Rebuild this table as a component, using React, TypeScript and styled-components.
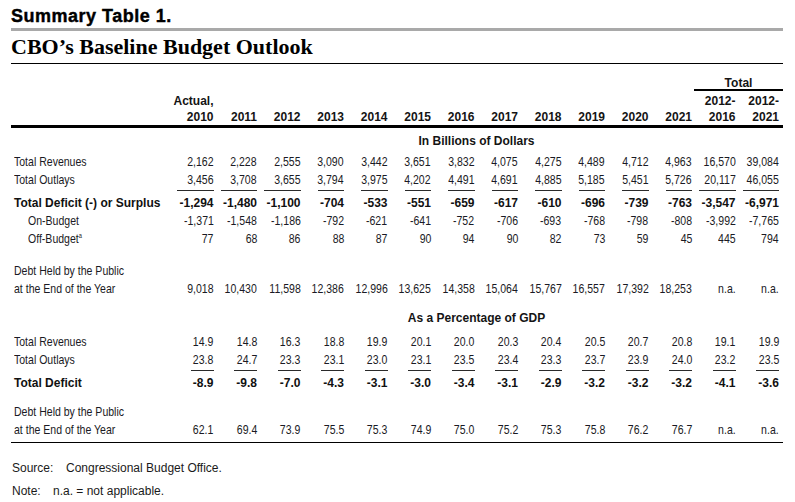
import React from "react";
import styled, { createGlobalStyle } from "styled-components";

const GlobalStyle = createGlobalStyle`
  html, body { margin: 0; padding: 0; background: #ffffff; }
  body { font-family: "Liberation Sans", Arial, sans-serif; color: #141414; }
`;

const COLS = "159px repeat(14, 43.5px)";

const Page = styled.div`
  box-sizing: border-box;
  width: 795px;
  padding: 6px 12px 0 11px;
`;

const Kicker = styled.div`
  font-family: "Liberation Sans", Arial, sans-serif;
  font-weight: 700;
  font-size: 18px;
  line-height: 20px;
  letter-spacing: 0.5px;
  color: #000;
  -webkit-text-stroke: 0.4px #000;
`;

const GreyRule = styled.div`
  height: 3px;
  margin-top: 2px;
  background: #a9a9a9;
`;

const Title = styled.h1`
  margin: 4px 0 0;
  font-family: "Liberation Serif", "Times New Roman", serif;
  font-weight: 700;
  font-size: 22px;
  line-height: 24px;
  color: #000;
`;

const TitleRule = styled.div`
  height: 1px;
  margin-top: 4px;
  background: #000;
`;

const HeadGrid = styled.div`
  display: grid;
  grid-template-columns: ${COLS};
  grid-template-rows: 16px 18px 16px;
  padding-right: 4px;
  margin-top: 11px;
  border-bottom: 3px solid #000;
  font-family: "Liberation Sans", Arial, sans-serif;
  font-weight: 700;
  font-size: 12px;
  line-height: 16px;
  color: #141414;
`;

const HeadCell = styled.div<{ $col: number; $row: number }>`
  grid-column: ${(p) => p.$col};
  grid-row: ${(p) => p.$row};
  text-align: right;
  white-space: nowrap;
  padding-top: ${(p) => (p.$row === 2 ? "1.5px" : "0")};
`;

const TotalCell = styled.div`
  grid-column: 14 / 16;
  grid-row: 1;
  margin: 0 -4px 0 2px;
  text-align: center;
  border-bottom: 2px solid #000;
  height: 14px;
`;

const Body = styled.div`
  padding-bottom: 3px;
  border-bottom: 1px solid #000;
`;

const SectionRow = styled.div<{ $gap: number }>`
  display: grid;
  grid-template-columns: ${COLS};
  padding-right: 4px;
  margin-top: ${(p) => p.$gap}px;
  font-family: "Liberation Sans", Arial, sans-serif;
  font-weight: 700;
  font-size: 12px;
  line-height: 18px;
`;

const SectionTitle = styled.div`
  grid-column: 2 / -1;
  text-align: center;
  padding-left: 4px;
`;

const DataRow = styled.div<{ $bold?: boolean; $gap?: number }>`
  display: grid;
  grid-template-columns: ${COLS};
  padding-right: 4px;
  margin-top: ${(p) => p.$gap ?? 0}px;
  font-family: "Liberation Sans", Arial, sans-serif;
  font-weight: ${(p) => (p.$bold ? 700 : 400)};
  font-size: ${(p) => (p.$bold ? "12px" : "13px")};
  line-height: 18px;
  color: ${(p) => (p.$bold ? "#111" : "#1a1a24")};
`;

const Label = styled.div<{ $indent?: boolean }>`
  padding-left: ${(p) => (p.$indent ? "17px" : "3px")};
  white-space: nowrap;
`;

const Value = styled.div`
  text-align: right;
  white-space: nowrap;
`;

/* condensed face: the reference uses a narrow grotesque */
const Narrow = styled.span<{ $origin: "left" | "right" }>`
  display: inline-block;
  transform: scaleX(0.81);
  transform-origin: ${(p) => p.$origin} center;
  white-space: nowrap;
`;

const Ruled = styled.span<{ $hidden?: boolean }>`
  display: inline-block;
  margin-top: 1px;
  padding: 3px 0 0 ${(p) => (p.$hidden ? 0 : 2)}px;
  border-top: 1px solid ${(p) => (p.$hidden ? "transparent" : "#2a2a2a")};
`;

const Sup = styled.sup`
  font-size: 7px;
  line-height: 0;
  vertical-align: 5px;
`;

const Notes = styled.div`
  margin-top: 16px;
  font-family: "Liberation Sans", Arial, sans-serif;
  font-size: 12px;
  color: #1a1a1a;
`;

const NoteLine = styled.div`
  display: flex;
  line-height: 18px;
  height: 23px;
  padding-left: 1px;
`;

const NoteKey = styled.span<{ $w: number }>`
  width: ${(p) => p.$w}px;
  flex: none;
`;

type Row = { label: string; values: string[]; bold?: boolean; indent?: boolean; ruled?: boolean; gap?: number; sup?: string };

const years = ["2010", "2011", "2012", "2013", "2014", "2015", "2016", "2017", "2018", "2019", "2020", "2021"];

const billions: Row[] = [
  { label: "Total Revenues", values: ["2,162", "2,228", "2,555", "3,090", "3,442", "3,651", "3,832", "4,075", "4,275", "4,489", "4,712", "4,963", "16,570", "39,084"], gap: 3 },
  { label: "Total Outlays", values: ["3,456", "3,708", "3,655", "3,794", "3,975", "4,202", "4,491", "4,691", "4,885", "5,185", "5,451", "5,726", "20,117", "46,055"] },
  { label: "Total Deficit (-) or Surplus", bold: true, ruled: true, values: ["-1,294", "-1,480", "-1,100", "-704", "-533", "-551", "-659", "-617", "-610", "-696", "-739", "-763", "-3,547", "-6,971"] },
  { label: "On-Budget", indent: true, values: ["-1,371", "-1,548", "-1,186", "-792", "-621", "-641", "-752", "-706", "-693", "-768", "-798", "-808", "-3,992", "-7,765"] },
  { label: "Off-Budget", sup: "a", indent: true, values: ["77", "68", "86", "88", "87", "90", "94", "90", "82", "73", "59", "45", "445", "794"] },
  { label: "Debt Held by the Public", values: [], gap: 14 },
  { label: "at the End of the Year", values: ["9,018", "10,430", "11,598", "12,386", "12,996", "13,625", "14,358", "15,064", "15,767", "16,557", "17,392", "18,253", "n.a.", "n.a."] },
];

const percent: Row[] = [
  { label: "Total Revenues", values: ["14.9", "14.8", "16.3", "18.8", "19.9", "20.1", "20.0", "20.3", "20.4", "20.5", "20.7", "20.8", "19.1", "19.9"], gap: 6 },
  { label: "Total Outlays", values: ["23.8", "24.7", "23.3", "23.1", "23.0", "23.1", "23.5", "23.4", "23.3", "23.7", "23.9", "24.0", "23.2", "23.5"] },
  { label: "Total Deficit", bold: true, ruled: true, values: ["-8.9", "-9.8", "-7.0", "-4.3", "-3.1", "-3.0", "-3.4", "-3.1", "-2.9", "-3.2", "-3.2", "-3.2", "-4.1", "-3.6"] },
  { label: "Debt Held by the Public", values: [], gap: 11 },
  { label: "at the End of the Year", values: ["62.1", "69.4", "73.9", "75.5", "75.3", "74.9", "75.0", "75.2", "75.3", "75.8", "76.2", "76.7", "n.a.", "n.a."] },
];

function Rows({ rows }: { rows: Row[] }) {
  return (
    <>
      {rows.map((r, i) => (
        <DataRow key={i} $bold={r.bold} $gap={r.gap}>
          <Label $indent={r.indent}>
            {r.ruled ? (
              <Ruled $hidden>{r.label}</Ruled>
            ) : (
              <Narrow $origin="left">
                {r.label}
                {r.sup && <Sup>{r.sup}</Sup>}
              </Narrow>
            )}
          </Label>
          {r.values.map((v, j) => (
            <Value key={j}>{r.ruled ? <Ruled>{v}</Ruled> : <Narrow $origin="right">{v}</Narrow>}</Value>
          ))}
        </DataRow>
      ))}
    </>
  );
}

export default function App() {
  return (
    <>
      <GlobalStyle />
      <Page>
        <Kicker>Summary Table 1.</Kicker>
        <GreyRule />
        <Title>CBO’s Baseline Budget Outlook</Title>
        <TitleRule />
        <HeadGrid>
          <TotalCell>Total</TotalCell>
          <HeadCell $col={2} $row={2}>Actual,</HeadCell>
          <HeadCell $col={14} $row={2}>2012-</HeadCell>
          <HeadCell $col={15} $row={2}>2012-</HeadCell>
          {years.map((y, i) => (
            <HeadCell key={y} $col={i + 2} $row={3}>{y}</HeadCell>
          ))}
          <HeadCell $col={14} $row={3}>2016</HeadCell>
          <HeadCell $col={15} $row={3}>2021</HeadCell>
        </HeadGrid>
        <Body>
          <SectionRow $gap={4}>
            <SectionTitle>In Billions of Dollars</SectionTitle>
          </SectionRow>
          <Rows rows={billions} />
          <SectionRow $gap={11}>
            <SectionTitle>As a Percentage of GDP</SectionTitle>
          </SectionRow>
          <Rows rows={percent} />
        </Body>
        <Notes>
          <NoteLine>
            <NoteKey $w={54}>Source:</NoteKey>
            <span>Congressional Budget Office.</span>
          </NoteLine>
          <NoteLine>
            <NoteKey $w={41}>Note:</NoteKey>
            <span>n.a. = not applicable.</span>
          </NoteLine>
        </Notes>
      </Page>
    </>
  );
}
